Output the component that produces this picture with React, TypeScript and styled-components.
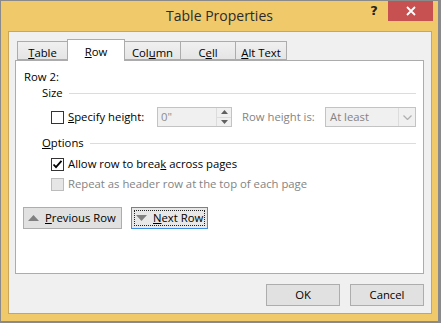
import React from "react";
import styled, { createGlobalStyle } from "styled-components";

const FONT = `"Open Sans", "Noto Sans", sans-serif`;

const Global = createGlobalStyle`
  html, body { margin: 0; padding: 0; }
  body { width: 441px; height: 323px; overflow: hidden; font-family: ${FONT}; }
  * { box-sizing: border-box; }
`;

const Window = styled.div`
  width: 441px;
  height: 323px;
  background: #f0c96b;
  border-style: solid;
  border-color: #8a8a8a;
  border-width: 1px 3px 2px 1px;
  display: flex;
  flex-direction: column;
  font-family: ${FONT};
  font-size: 11.3px;
  color: #000;
`;

const TitleBar = styled.div`
  height: 30px;
  display: grid;
  grid-template-columns: 1fr auto 1fr;
  align-items: start;
`;

const TitleText = styled.div`
  grid-column: 2;
  padding-top: 5px;
  font-size: 14px;
  line-height: 20px;
  color: #2b2b2b;
`;

const Controls = styled.div`
  grid-column: 3;
  justify-self: end;
  display: flex;
  align-items: flex-start;
  margin-right: 5px;
`;

const HelpButton = styled.div`
  width: 20px;
  height: 20px;
  margin-right: 4px;
  display: flex;
  align-items: center;
  justify-content: center;
  font-family: "DejaVu Sans", sans-serif;
  font-weight: bold;
  font-size: 13px;
  color: #222;
  padding-bottom: 2px;
`;

const CloseButton = styled.div`
  width: 45px;
  height: 20px;
  background: #c75050;
  display: flex;
  align-items: center;
  justify-content: center;
`;

const Client = styled.div`
  flex: 1;
  margin: 0 6px 7px 7px;
  border: 1px solid #c9a65c;
  background: #f0f0f0;
  padding: 7px 7px 7px 6px;
  display: flex;
  flex-direction: column;
`;

const TabStrip = styled.div`
  height: 22px;
  display: flex;
  align-items: flex-end;
  padding-left: 2px;
  margin-bottom: -1px;
  position: relative;
  z-index: 1;
`;

const Tab = styled.div<{ $w: number; $active?: boolean }>`
  width: ${(p) => p.$w}px;
  margin-left: -1px;
  &:first-child { margin-left: 0; }
  border: 1px solid #acacac;
  text-align: center;
  line-height: 16px;
  ${(p) =>
    p.$active
      ? `
    height: 22px;
    background: #fff;
    border-bottom: none;
    padding-top: 4px;
    position: relative;
    z-index: 2;
  `
      : `
    height: 19px;
    margin-bottom: 1px;
    background: linear-gradient(#f0f0f0, #e5e5e5);
    padding-top: 3px;
  `}
`;

const U = styled.span`
  text-decoration: underline;
  text-underline-offset: 1px;
`;

const Panel = styled.div`
  flex: 1;
  background: #fff;
  border: 1px solid #acacac;
  padding: 8px 7px 0 8px;
  display: flex;
  flex-direction: column;
`;

const Text = styled.div<{ $disabled?: boolean }>`
  line-height: 16px;
  white-space: nowrap;
  color: ${(p) => (p.$disabled ? "#838383" : "#000")};
`;

const GroupHeader = styled.div<{ $mt: number }>`
  display: flex;
  align-items: center;
  margin-left: 18px;
  margin-top: ${(p) => p.$mt}px;
  line-height: 16px;
`;

const GroupLine = styled.div`
  flex: 1;
  height: 1px;
  background: #dcdcdc;
  margin-left: 6px;
  margin-top: 1px;
`;

const Row = styled.div<{ $mt: number }>`
  display: flex;
  align-items: center;
  margin-left: 27px;
  margin-top: ${(p) => p.$mt}px;
`;

const Box = styled.span<{ $disabled?: boolean }>`
  width: 13px;
  height: 13px;
  flex: none;
  border: 1px solid ${(p) => (p.$disabled ? "#bcbcbc" : "#333")};
  background: ${(p) => (p.$disabled ? "#e6e6e6" : "#fff")};
  margin-right: 4px;
  display: flex;
  align-items: center;
  justify-content: center;
`;

const FixedLabel = styled(Text)<{ $w: number; $ml?: number }>`
  width: ${(p) => p.$w}px;
  margin-left: ${(p) => p.$ml ?? 0}px;
  flex: none;
`;

const SpinBox = styled.div`
  width: 75px;
  height: 20px;
  border: 1px solid #c3c3c3;
  background: #f0f0f0;
  display: flex;
  align-items: stretch;
`;

const SpinValue = styled.div`
  flex: 1;
  padding-left: 3px;
  line-height: 17px;
  color: #8d8d8d;
`;

const SpinButtons = styled.div`
  width: 15px;
  display: flex;
  flex-direction: column;
  border-left: 1px solid #dcdcdc;
`;

const SpinHalf = styled.div<{ $top?: boolean }>`
  flex: 1;
  display: flex;
  align-items: center;
  justify-content: center;
  border-bottom: ${(p) => (p.$top ? "1px solid #dcdcdc" : "none")};
`;

const Select = styled.div`
  width: 91px;
  height: 20px;
  border: 1px solid #c3c3c3;
  background: #f0f0f0;
  display: flex;
`;

const SelectValue = styled.div`
  flex: 1;
  padding-left: 4px;
  line-height: 17px;
  color: #838383;
`;

const SelectArrow = styled.div`
  width: 17px;
  border-left: 1px solid #dcdcdc;
  display: flex;
  align-items: center;
  justify-content: center;
`;

const NavRow = styled.div`
  display: flex;
  gap: 9px;
  margin-top: 15px;
  margin-left: -1px;
`;

const Button = styled.div<{ $w: number; $focused?: boolean }>`
  width: ${(p) => p.$w}px;
  height: 22px;
  background: ${(p) => (p.$focused ? "#e8e8e8" : "#e1e1e1")};
  border: 1px solid ${(p) => (p.$focused ? "#3c8fe4" : "#adadad")};
  display: flex;
  align-items: center;
  justify-content: center;
  line-height: 16px;
  position: relative;
  white-space: nowrap;
  ${(p) =>
    p.$focused
      ? `&::after {
    content: "";
    position: absolute;
    inset: 2px;
    border: 1px dotted #222;
  }`
      : ""}
`;

const NavButton = styled(Button)`
  justify-content: flex-start;
  padding-left: 4px;
`;

const Tri = styled.svg`
  margin-right: 6px;
  flex: none;
`;

const Footer = styled.div`
  display: flex;
  justify-content: flex-end;
  gap: 10px;
  margin-top: 10px;
`;

const Check = () => (
  <svg width="11" height="11" viewBox="0 0 11 11">
    <path d="M1.5 5.5 L4 8.2 L9.5 1.8" fill="none" stroke="#000" strokeWidth="1.8" />
  </svg>
);

export default function App() {
  return (
    <>
      <Global />
      <Window>
        <TitleBar>
          <TitleText>Table Properties</TitleText>
          <Controls>
            <HelpButton>?</HelpButton>
            <CloseButton>
              <svg width="10" height="10" viewBox="0 0 10 10">
                <path d="M1 1 L9 9 M9 1 L1 9" stroke="#fff" strokeWidth="1.8" />
              </svg>
            </CloseButton>
          </Controls>
        </TitleBar>
        <Client>
          <TabStrip>
            <Tab $w={51}>
              <U>T</U>able
            </Tab>
            <Tab $w={58} $active>
              <U>R</U>ow
            </Tab>
            <Tab $w={57}>
              Col<U>u</U>mn
            </Tab>
            <Tab $w={56}>
              C<U>e</U>ll
            </Tab>
            <Tab $w={52}>
              <U>A</U>lt Text
            </Tab>
          </TabStrip>
          <Panel>
            <Text>Row 2:</Text>
            <GroupHeader $mt={0}>
              Size
              <GroupLine />
            </GroupHeader>
            <Row $mt={6}>
              <Box />
              <FixedLabel $w={89}>
                <U>S</U>pecify height:
              </FixedLabel>
              <SpinBox>
                <SpinValue>0"</SpinValue>
                <SpinButtons>
                  <SpinHalf $top>
                    <svg width="7" height="4" viewBox="0 0 7 4">
                      <path d="M0 4 L3.5 0 L7 4 Z" fill="#606060" />
                    </svg>
                  </SpinHalf>
                  <SpinHalf>
                    <svg width="7" height="4" viewBox="0 0 7 4">
                      <path d="M0 0 L3.5 4 L7 0 Z" fill="#606060" />
                    </svg>
                  </SpinHalf>
                </SpinButtons>
              </SpinBox>
              <FixedLabel $w={83} $ml={10} $disabled>
                Row height is:
              </FixedLabel>
              <Select>
                <SelectValue>At least</SelectValue>
                <SelectArrow>
                  <svg width="9" height="5" viewBox="0 0 9 5">
                    <path d="M0.5 0.5 L4.5 4.5 L8.5 0.5" fill="none" stroke="#b0b0b0" strokeWidth="1.3" />
                  </svg>
                </SelectArrow>
              </Select>
            </Row>
            <GroupHeader $mt={8}>
              <span>
                <U>O</U>ptions
              </span>
              <GroupLine />
            </GroupHeader>
            <Row $mt={5}>
              <Box>
                <Check />
              </Box>
              <Text>
                Allow row to brea<U>k</U> across pages
              </Text>
            </Row>
            <Row $mt={4}>
              <Box $disabled />
              <Text $disabled>Repeat as header row at the top of each page</Text>
            </Row>
            <NavRow>
              <NavButton $w={99}>
                <Tri width="11" height="6" viewBox="0 0 11 6">
                  <path d="M0 6 L5.5 0 L11 6 Z" fill="#808080" />
                </Tri>
                <span>
                  <U>P</U>revious Row
                </span>
              </NavButton>
              <NavButton $w={77} $focused>
                <Tri width="11" height="6" viewBox="0 0 11 6">
                  <path d="M0 0 L5.5 6 L11 0 Z" fill="#808080" />
                </Tri>
                <span>
                  <U>N</U>ext Row
                </span>
              </NavButton>
            </NavRow>
          </Panel>
          <Footer>
            <Button $w={74}>OK</Button>
            <Button $w={74}>Cancel</Button>
          </Footer>
        </Client>
      </Window>
    </>
  );
}
